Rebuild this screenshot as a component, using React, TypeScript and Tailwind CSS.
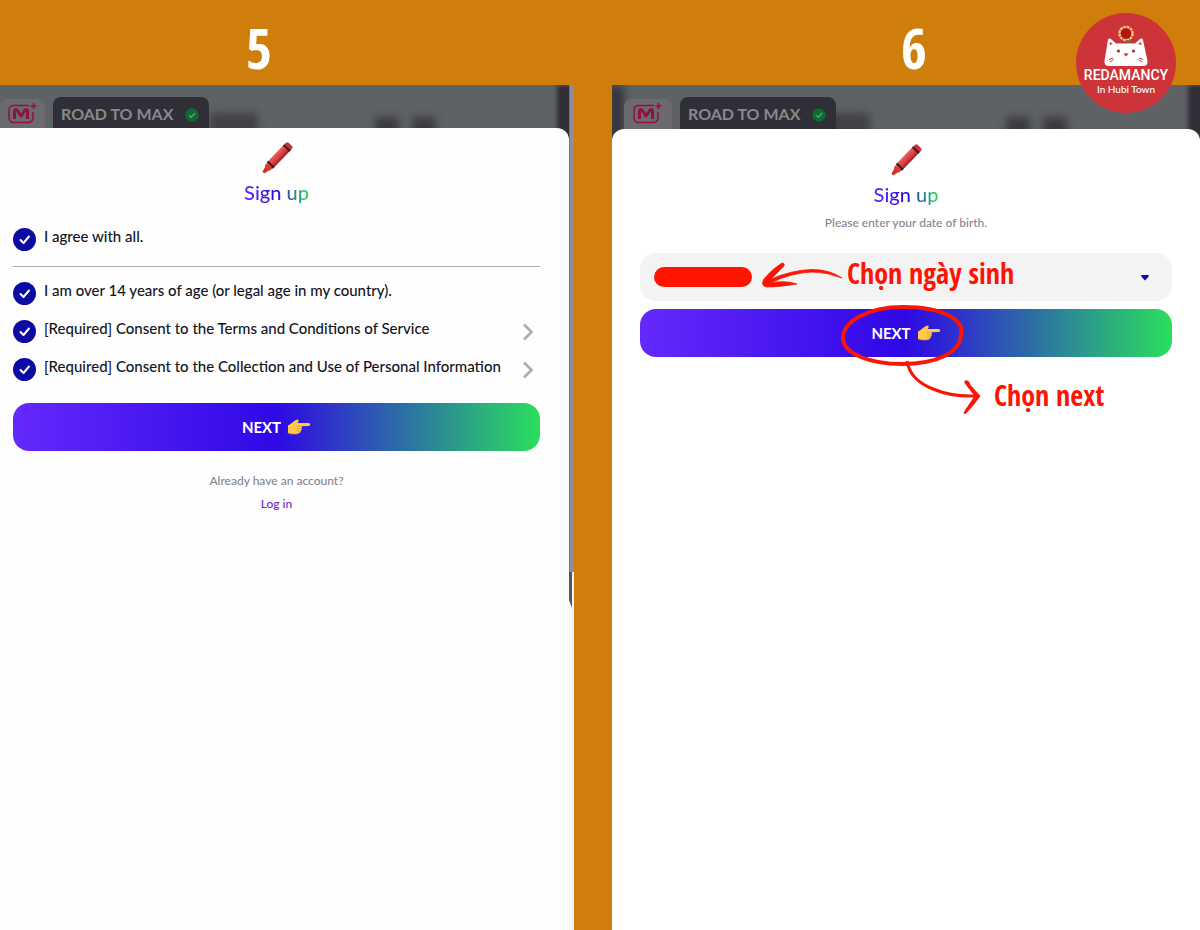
import type { ReactNode } from "react";

const Crayon = () => (
  <svg width="32" height="32" viewBox="0 0 32 32" aria-hidden="true">
    <defs>
      <linearGradient id="crayon" x1="0" y1="0" x2="0" y2="1">
        <stop offset="0" stopColor="#ee5f60" />
        <stop offset="0.6" stopColor="#d93a40" />
        <stop offset="1" stopColor="#8e1f27" />
      </linearGradient>
    </defs>
    <g transform="rotate(-46 16 16)">
      <path d="M-3.500 15 L2.500 13.400 V19 L-3.500 17.600 Q-5 16 -3.500 15Z" fill="#d92b20" />
      <rect x="1.500" y="12.400" width="4" height="7.400" rx="1.500" fill="#e0382a" />
      <rect x="4.500" y="11.700" width="29" height="8.800" rx="1.500" fill="url(#crayon)" />
      <rect x="6" y="11.700" width="2" height="8.800" fill="#35171a" />
      <rect x="29" y="11.700" width="2" height="8.800" fill="#35171a" />
      <rect x="31" y="11.900" width="4" height="8.400" rx="2" fill="#c4323a" />
    </g>
  </svg>
);

const Hand = () => (
  <svg width="24" height="16" viewBox="0 0 24 16" aria-hidden="true">
    <path
      d="M1 6.500 Q3 5.500 5.500 3.500 Q8 1.200 10.500 0.600 Q12.400 0.500 11.600 2.300 L10.600 4 H21.500 Q23.300 4.200 23.200 5.700 Q23 7 21.500 7.100 L14.500 7.300 Q15.500 8.400 14.600 9.500 Q15 11 13.800 11.900 Q13.900 13.400 12.300 14 Q11 15.200 7 14.900 Q3 14.800 1 13.900Z"
      fill="#fdca4a"
    />
    <path
      d="M14.500 7.300 H10 M14.600 9.600 H10.300 M13.800 12 H10.300 M1 13.900 Q4 15.300 8 15 Q11.600 15 12.500 13.900"
      fill="none"
      stroke="#e09a2c"
      strokeWidth="0.700"
      strokeLinecap="round"
    />
  </svg>
);

const MLogo = () => (
  <svg width="30" height="22" viewBox="0 0 30 22" fill="none" aria-hidden="true">
    <path
      d="M21 2.500 H6 Q1 2.500 1 7.500 V14.500 Q1 19.500 6 19.500 H20 Q25 19.500 25 14.500 V9"
      stroke="#8f1146"
      strokeWidth="1.500"
    />
    <path
      d="M6.500 16 V9 Q6.500 5.500 9 7 L13 13 L17 7 Q19.500 5.500 19.500 9 V16"
      stroke="#8f1146"
      strokeWidth="3"
      strokeLinejoin="round"
    />
    <path d="M25.500 0 V6 M22.500 3 H28.500" stroke="#8f1146" strokeWidth="1.600" />
  </svg>
);

const Verified = () => (
  <svg width="14" height="14" viewBox="0 0 14 14" aria-hidden="true">
    <path
      d="M7 0 L8.700 1.100 L10.700 0.900 L11.500 2.700 L13.300 3.700 L13 5.700 L14 7 L13 8.600 L13.200 10.500 L11.400 11.400 L10.500 13.200 L8.500 13 L7 14 L5.400 13 L3.500 13.200 L2.600 11.400 L0.800 10.500 L1 8.500 L0 7 L1 5.400 L0.800 3.500 L2.600 2.600 L3.500 0.800 L5.400 1Z"
      fill="#0b6b30"
    />
    <path d="M4.200 7.200 L6.300 9.200 L10 5" fill="none" stroke="#6f9a80" strokeWidth="1.300" />
  </svg>
);

// dimmed page behind the sheet
const Backdrop = ({ inset }: { inset?: boolean }) => (
  <div
    className={`relative overflow-hidden flex gap-2 pt-3 bg-[#5f6265] ${
      inset ? "h-14 pl-3" : "h-[55px]"
    }`}
  >
    {inset && <div className="absolute -left-1 top-0 h-full w-4 bg-[#36353d] blur-xs" />}
    <div className="absolute left-[210px] top-7 h-8 w-12 bg-[#414143] blur-xs" />
    <div className="absolute right-[170px] top-8 h-8 w-6 bg-[#3b3b3d] blur-xs" />
    <div className="absolute right-[133px] top-8 h-8 w-6 bg-[#3b3b3d] blur-xs" />
    <div className="absolute -right-1 top-0 h-full w-4 bg-[#302e37] blur-[2px]" />
    <div
      className={`relative flex shrink-0 justify-center rounded-lg bg-[#6b6b6d] pt-1 mt-[2px] ${
        inset ? "w-12" : "w-[45px]"
      }`}
    >
      <MLogo />
    </div>
    <div className="relative flex h-12 shrink-0 items-start gap-3 rounded-lg bg-[#302f37] pr-[10px] pl-2 pt-[5px]">
      <span className="text-[16px] leading-6 font-bold text-[#89898c]">ROAD TO MAX</span>
      <span className="pt-[6px]">
        <Verified />
      </span>
    </div>
  </div>
);

const Heading = () => (
  <div className="flex flex-col items-center">
    <Crayon />
    <h2 className="mt-[6px] bg-linear-to-r/srgb from-[#6429fb] via-[#2f08d6] via-50% to-[#2adf5d] bg-clip-text text-[20px] leading-6 font-medium text-transparent">
      Sign up
    </h2>
  </div>
);

const NextButton = () => (
  <button
    type="button"
    className="flex h-12 w-full items-center justify-center gap-[6px] rounded-2xl bg-linear-to-r/srgb from-[#6429fb] via-[#2f08e6] via-50% to-[#2adf5d] text-[15px] font-bold text-white"
  >
    NEXT
    <Hand />
  </button>
);

const Agreement = ({ children, link }: { children: ReactNode; link?: boolean }) => (
  <div className="flex h-[38px] items-start justify-between">
    <label className="flex items-start gap-2">
      <span className="grid shrink-0">
        <input
          type="checkbox"
          defaultChecked
          className="col-start-1 row-start-1 size-[23px] appearance-none rounded-full bg-[#0c0ba4]"
        />
        <svg
          viewBox="0 0 23 23"
          className="pointer-events-none col-start-1 row-start-1 size-[23px]"
          aria-hidden="true"
        >
          <path
            d="M7.500 12 L10.500 15 L16 8.500"
            fill="none"
            stroke="#fff"
            strokeWidth="2"
            strokeLinecap="round"
            strokeLinejoin="round"
          />
        </svg>
      </span>
      <span className="text-[15px] leading-4 font-medium text-[#14141c]">{children}</span>
    </label>
    {link && (
      <button type="button" aria-label="View details" className="pt-[3px] pr-[6px]">
        <svg width="12" height="18" viewBox="0 0 12 18" aria-hidden="true">
          <path d="M2 1.500 L9.500 9 L2 16.500" fill="none" stroke="#adadad" strokeWidth="2.600" />
        </svg>
      </button>
    )}
  </div>
);

const Badge = () => (
  <div className="absolute top-[13px] right-6 flex size-[100px] flex-col items-center rounded-full bg-[#cd3439] pt-3 text-white">
    <svg width="46" height="42" viewBox="0 0 46 42" aria-hidden="true">
      <circle cx="23" cy="8.500" r="6.500" fill="none" stroke="#f6cf7c" strokeWidth="2.400" strokeDasharray="2.700 0.700" />
      <circle cx="23" cy="8.500" r="5.200" fill="#b81313" />
      <path d="M25 15 V18 M22 17 Q25 14.500 28 17" stroke="#4e8a33" strokeWidth="1.600" fill="none" />
      <path
        d="M5 14.500 Q6.500 12.500 8.500 14.500 L13 18.500 H32 L36.500 14.500 Q39 12.500 40 15 L44.500 36 Q45 41 40 41 H6 Q1 41 1.500 36Z"
        fill="#fff"
      />
      <path d="M7 17 L6.500 20 L10 19Z M38 17 L38.500 20 L35 19Z" fill="#cd3439" />
      <circle cx="15.500" cy="26" r="1.600" fill="#b3262c" />
      <circle cx="30.500" cy="26" r="1.600" fill="#b3262c" />
      <path d="M20.500 28.500 H25.500 L23 31.500Z" fill="#b3262c" />
      <path
        d="M6 34.500 L10 33 M7 37 L10.500 34.500 M40 34.500 L36 33 M39 37 L35.500 34.500"
        stroke="#cd3439"
        strokeWidth="1"
      />
    </svg>
    <span className="font-['Roboto'] text-[14px] leading-4 font-medium">REDAMANCY</span>
    <span className="text-[10px] leading-3 font-medium">In Hubi Town</span>
  </div>
);

const Notes = () => (
  <div className="pointer-events-none absolute top-0 left-1/2 h-[170px] w-[532px] -translate-x-1/2 text-[28px] leading-8 font-bold text-[#fb1505] font-['Open_Sans_Condensed','Roboto_Condensed','Noto_Sans_Condensed','Liberation_Sans_Narrow',sans-serif]">
    <svg width="532" height="170" viewBox="0 0 532 170" fill="none" aria-hidden="true">
      <rect x="14" y="14" width="98" height="20" rx="10" fill="#fe1400" />
      <path
        d="M202 25 Q187 19 172 19 Q150 20 131 30 Q145 27 157 31 Q140 34 127 34 Q120 33 124 26 Q131 17 142 10 Q145 10 144 13 L131 26 Q152 17 172 16.500 Q190 16.500 202 25Z"
        fill="#fb1505"
        stroke="#fb1505"
        strokeWidth="0.800"
      />
      <path
        d="M321 82 C325 68 305 54 263 54 C227 54 203 69 203 85 C203 101 231 111 262 111 C296 111 320 100 321 82Z"
        stroke="#fb1505"
        strokeWidth="4"
      />
      <path d="M267 108 Q270 127 293 136 Q312 144 336 143" stroke="#fb1505" strokeWidth="3" />
      <path
        d="M325 128 Q329 127 330 132 L340 143 Q333 153 326 160 Q323 162 325 158 L335 143 L325 130Z"
        fill="#fb1505"
        stroke="#fb1505"
        strokeWidth="1"
      />
    </svg>
    <span className="absolute top-1 left-[207px] whitespace-nowrap">Chọn ngày sinh</span>
    <span className="absolute top-[126px] left-[354px] whitespace-nowrap">Chọn next</span>
  </div>
);

const App = () => {
  return (
    <main className="relative grid min-h-screen grid-cols-[574fr_588fr] grid-rows-[85px_1fr] gap-x-[38px] bg-[#cf7d0b] font-['Lato',sans-serif]">
      <div className="flex items-center justify-center pt-2 pr-14 text-[56px] font-bold text-white font-['Open_Sans_Condensed','Roboto_Condensed','Noto_Sans_Condensed','Liberation_Sans_Narrow',sans-serif]">
        5
      </div>
      <div className="flex items-center justify-center pt-2 pl-4 text-[56px] font-bold text-white font-['Open_Sans_Condensed','Roboto_Condensed','Noto_Sans_Condensed','Liberation_Sans_Narrow',sans-serif]">
        6
      </div>

      <section className="flex bg-white">
        <div className="flex min-w-0 flex-1 flex-col">
          <Backdrop />
          <div className="relative -mt-3 flex-1 rounded-tr-xl bg-[#fefefe] pt-[14px] pr-[29px] pl-[13px]">
            <Heading />
            <div className="mt-[24px] border-b border-[#ababab]">
              <Agreement>I agree with all.</Agreement>
            </div>
            <div className="mt-[15px] mb-[7px]">
              <Agreement>I am over 14 years of age (or legal age in my country).</Agreement>
              <Agreement link>[Required] Consent to the Terms and Conditions of Service</Agreement>
              <Agreement link>
                [Required] Consent to the Collection and Use of Personal Information
              </Agreement>
            </div>
            <NextButton />
            <div className="mt-[18px] flex flex-col items-center text-[12px] leading-[23px] font-medium">
              <p className="text-[#85858d]">Already have an account?</p>
              <a href="#login" className="text-[#6a2bc4]">
                Log in
              </a>
            </div>
          </div>
        </div>
        {/* scrollbar */}
        <div className="w-[5px] bg-[#f7f7fb]">
          <div className="h-[487px] border-l border-[#74747f] bg-[#8d8d9b]" />
          <svg width="5" height="36" viewBox="0 0 5 36" aria-hidden="true">
            <path d="M0 0 H3 V36 L0 28Z" fill="#515566" />
          </svg>
        </div>
      </section>

      <section className="flex flex-col bg-white">
        <Backdrop inset />
        <div className="relative -mt-3 flex-1 rounded-t-xl bg-white px-7 pt-[15px]">
          <Heading />
          <p className="mt-[7px] text-center text-[12px] leading-5 font-medium text-[#85858d]">
            Please enter your date of birth.
          </p>
          <div className="relative mt-5">
            <div className="relative">
              <select
                aria-label="Date of birth"
                className="h-12 w-full appearance-none rounded-2xl bg-[#f3f3f3] px-4"
              >
                <option value=""></option>
              </select>
              <svg
                width="8"
                height="6"
                viewBox="0 0 8 6"
                className="pointer-events-none absolute top-[22px] right-[23px]"
                aria-hidden="true"
              >
                <path d="M1 0 H7 Q8.500 0.500 7.300 2 L4 5.500 L0.700 2 Q-0.500 0.500 1 0Z" fill="#0c0ba4" />
              </svg>
            </div>
            <div className="mt-2">
              <NextButton />
            </div>
            <Notes />
          </div>
        </div>
      </section>

      <Badge />
    </main>
  );
};

export default App;
